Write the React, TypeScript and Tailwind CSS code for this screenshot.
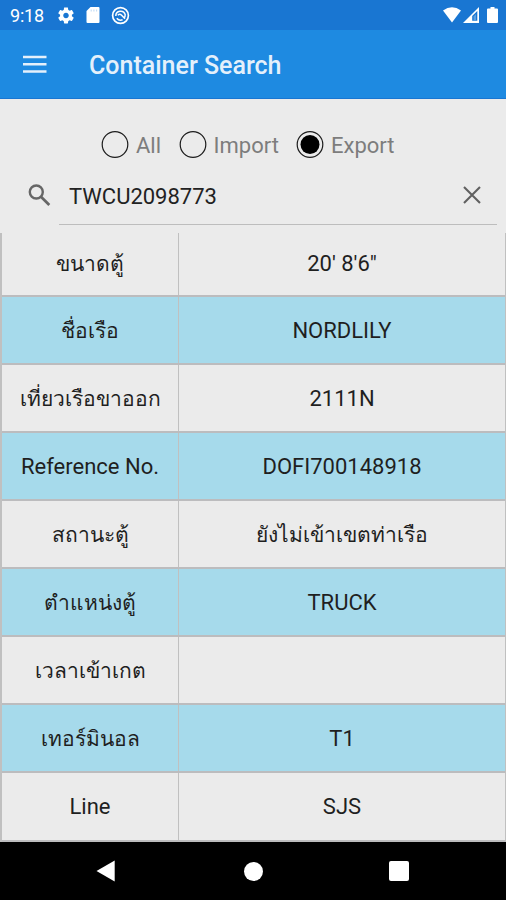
import React from "react";

type Row = { label: string; value: string; thaiLabel?: boolean; thaiValue?: boolean };

const rows: Row[] = [
  { label: "ขนาดตู้", value: "20' 8'6\"", thaiLabel: true },
  { label: "ชื่อเรือ", value: "NORDLILY", thaiLabel: true },
  { label: "เที่ยวเรือขาออก", value: "2111N", thaiLabel: true },
  { label: "Reference No.", value: "DOFI700148918" },
  { label: "สถานะตู้", value: "ยังไม่เข้าเขตท่าเรือ", thaiLabel: true, thaiValue: true },
  { label: "ตำแหน่งตู้", value: "TRUCK", thaiLabel: true },
  { label: "เวลาเข้าเกต", value: "", thaiLabel: true },
  { label: "เทอร์มินอล", value: "T1", thaiLabel: true },
  { label: "Line", value: "SJS" },
];

function StatusBar() {
  return (
    <header className="flex h-[30px] items-center bg-[#1976d2] pl-[10px] text-white">
      <span className="mt-[2px] w-[46px] text-[18px] leading-[30px] tracking-[-0.2px]">9:18</span>
      <svg className="h-[19px] w-[20px]" viewBox="0 0 24 24" fill="currentColor">
        <path d="M19.43 12.98c.04-.32.07-.64.07-.98s-.03-.66-.07-.98l2.11-1.65c.19-.15.24-.42.12-.64l-2-3.46c-.12-.22-.39-.3-.61-.22l-2.49 1c-.52-.4-1.08-.73-1.69-.98l-.38-2.65C14.46 2.18 14.25 2 14 2h-4c-.25 0-.46.18-.49.42l-.38 2.65c-.61.25-1.17.59-1.69.98l-2.49-1c-.23-.09-.49 0-.61.22l-2 3.46c-.13.22-.07.49.12.64l2.11 1.65c-.04.32-.07.65-.07.98s.03.66.07.98l-2.11 1.65c-.19.15-.24.42-.12.64l2 3.46c.12.22.39.3.61.22l2.49-1c.52.4 1.08.73 1.69.98l.38 2.65c.03.24.24.42.49.42h4c.25 0 .46-.18.49-.42l.38-2.65c.61-.25 1.17-.59 1.69-.98l2.49 1c.23.09.49 0 .61-.22l2-3.46c.12-.22.07-.49-.12-.64l-2.11-1.65zM12 15.5c-1.93 0-3.5-1.57-3.5-3.5s1.57-3.5 3.5-3.5 3.5 1.57 3.5 3.5-1.57 3.5-3.5 3.5z" />
      </svg>
      <svg className="ml-[10px] h-[16px] w-[14px]" viewBox="0 0 14 16">
        <path d="M4.5 0H12.5Q13.5 0 13.5 1V15Q13.5 16 12.5 16H1.5Q.5 16 .5 15V4Z" fill="white" />
        <path d="M5.2 2.5V4.5M7.9 2.5V4.5M10.6 2.5V4.5" stroke="#c2dcf5" strokeWidth="1.1" />
      </svg>
      <svg className="ml-[11px] h-[19px] w-[19px]" viewBox="0 0 19 19" fill="none" stroke="white">
        <circle cx="9.5" cy="9.5" r="7.9" strokeWidth="1.7" />
        <path d="M4.8 10A4.8 4.8 0 0 1 14.2 8.6Q14.3 10.6 13 12.2M6.8 9.2Q8.8 7.4 10.6 9.2L14 12.8M5.8 12.2Q8 15 11.6 13.8" strokeWidth="1.5" />
      </svg>
      <svg className="ml-auto h-[16px] w-[18px]" viewBox="0 0 18 16">
        <path d="M0 3.6Q9-3.2 18 3.6L9 15.5Z" fill="white" />
      </svg>
      <svg className="ml-[2px] h-[16px] w-[16px]" viewBox="0 0 16 16">
        <path d="M16 0V16H0Z" fill="white" />
        <path d="M9.2 13.8V9L14.3 4V13.8Z" fill="#1976d2" />
        <path d="M10.6 13.8V9.5L13 7V13.8Z" fill="#5c9fe0" />
      </svg>
      <svg className="ml-[8px] mr-[8px] h-[16px] w-[11px]" viewBox="0 0 11 16">
        <path d="M3.5 0H7.5V1.6H10Q11 1.6 11 2.6V15Q11 16 10 16H1Q0 16 0 15V2.6Q0 1.6 1 1.6H3.5Z" fill="white" />
      </svg>
    </header>
  );
}

function Radio({ label, checked, className }: { label: string; checked?: boolean; className: string }) {
  return (
    <label className={`flex items-center ${className}`}>
      <svg className="h-[28px] w-[28px] shrink-0" viewBox="0 0 28 28">
        <circle cx="14" cy="13.5" r="12.8" fill="none" stroke="#1c1c1c" strokeWidth="1.2" />
        {checked && <circle cx="14" cy="13.5" r="9.5" fill="black" />}
      </svg>
      <span className="ml-[7px] mt-[3px] whitespace-nowrap text-[22px] leading-[28px] text-[#7d7d7d]">{label}</span>
    </label>
  );
}

function Cell({ text, thai }: { text: string; thai?: boolean }) {
  return <span className={thai ? "-mt-px text-[21px]" : "text-[22px]"}>{text}</span>;
}

export default function App() {
  return (
    <div className="flex h-[900px] w-[506px] flex-col overflow-hidden bg-[#ebebeb] font-[Roboto,'Noto_Sans',sans-serif]">
      <StatusBar />
      <div className="flex h-[69px] items-center border-b border-[#1976d2] bg-[#1e8ae1] pl-[23px] text-[#e4f0fb]">
        <svg className="h-[18px] w-[24px]" viewBox="0 0 24 18">
          <path d="M0 2H23.5M0 9.3H23.5M0 16.5H23.5" stroke="currentColor" strokeWidth="2.4" />
        </svg>
        <h1 className="ml-[42px] mt-[4px] text-[25px] font-medium leading-[34px]">Container Search</h1>
      </div>
      <main className="flex h-[743px] flex-col">
        <div className="flex h-[91px] items-center pl-[101px]">
          <Radio label="All" className="w-[77.5px]" />
          <Radio label="Import" className="w-[117.5px]" />
          <Radio label="Export" checked className="w-[110px]" />
        </div>
        <div className="-mt-[28px] flex h-[63px] items-center pl-[28px]">
          <svg className="mt-[5px] h-[24px] w-[24px]" viewBox="0 0 24 24" fill="none" stroke="#666" strokeWidth="2.4">
            <circle cx="8.3" cy="8" r="6.5" />
            <path d="M13 12.8L21.3 21" strokeWidth="2.7" />
          </svg>
          <div className="ml-[7px] flex h-full w-[438px] items-center border-b border-[#bdbdbd] pl-[10px]">
            <span className="mt-[8px] text-[22px] leading-[30px] text-[#222]">TWCU2098773</span>
            <svg className="ml-auto mr-[16px] mt-[4px] h-[18px] w-[18px]" viewBox="0 0 18 18">
              <path d="M1 1L17 17M17 1L1 17" stroke="#606060" strokeWidth="2.1" />
            </svg>
          </div>
        </div>
        <div className="mt-[8px] flex flex-col border-l-2 border-r border-[#c0c0c0]">
          {rows.map((row, i) => (
            <div
              key={i}
              className={`flex border-b-2 border-[#bcbcbe] leading-[30px] text-[#1f1f1f] ${i === 0 ? "h-[64px]" : i === 8 ? "h-[69px]" : "h-[68px]"} ${i % 2 ? "bg-[#a6daeb]" : "bg-[#ebebeb]"}`}
            >
              <div className={`flex w-[177px] shrink-0 items-center justify-center whitespace-nowrap border-r border-[#c0c0c0] ${i % 8 === 0 ? "" : "pt-[2px]"}`}>
                <Cell text={row.label} thai={row.thaiLabel} />
              </div>
              <div className={`flex flex-1 items-center justify-center whitespace-nowrap ${i % 8 === 0 ? "" : "pt-[2px]"}`}>
                <Cell text={row.value} thai={row.thaiValue} />
              </div>
            </div>
          ))}
        </div>
      </main>
      <nav className="flex flex-1 items-center bg-black">
        <svg className="ml-[96px] h-[22px] w-[19px]" viewBox="0 0 19 22"><path d="M.5 11L18.7 .5V21.5Z" fill="white" /></svg>
        <div className="ml-[129px] h-[19px] w-[19px] rounded-full bg-white" />
        <div className="ml-[126px] h-[20px] w-[20px] rounded-[2px] bg-white" />
      </nav>
    </div>
  );
}
